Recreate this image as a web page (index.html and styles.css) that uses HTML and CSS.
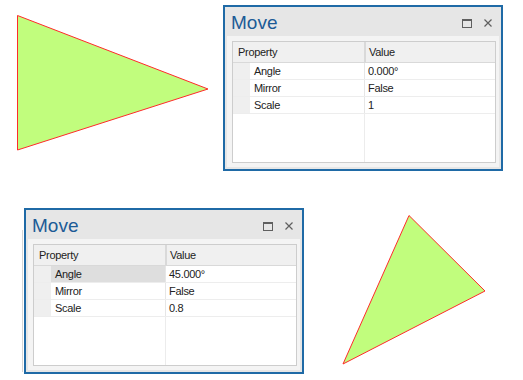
FILE: index.html
```html
<!DOCTYPE html>
<html>
<head>
<meta charset="utf-8">
<link rel="stylesheet" href="styles.css">
</head>
<body>
<div class="canvas">
  <svg class="shapes" width="523" height="380" viewBox="0 0 523 380">
    <polygon points="17.5,15.5 208,89 17.5,150" fill="#c1fd7d" stroke="#ff2a2a" stroke-width="1"/>
    <polygon points="409,215.5 485,291 343,364" fill="#c1fd7d" stroke="#ff2a2a" stroke-width="1"/>
  </svg>

  <div class="panel p1">
    <div class="titlebar">
      <span class="title">Move</span>
      <span class="btn-max"></span>
      <svg class="btn-close" width="8" height="8" viewBox="0 0 8 8"><path d="M0.5 0.5 L7.5 7.5 M7.5 0.5 L0.5 7.5" stroke="#5f5f5f" stroke-width="1.2"/></svg>
    </div>
    <div class="body">
      <div class="grid">
        <div class="hrow"><div class="hprop">Property</div><div class="hval">Value</div></div>
        <div class="row"><div class="gutter"></div><div class="name">Angle</div><div class="value">0.000°</div></div>
        <div class="row"><div class="gutter"></div><div class="name">Mirror</div><div class="value">False</div></div>
        <div class="row"><div class="gutter"></div><div class="name">Scale</div><div class="value">1</div></div>
        <div class="fill"><div class="fill-left"></div><div class="fill-right"></div></div>
      </div>
    </div>
  </div>

  <div class="panel p2">
    <div class="titlebar">
      <span class="title">Move</span>
      <span class="btn-max"></span>
      <svg class="btn-close" width="8" height="8" viewBox="0 0 8 8"><path d="M0.5 0.5 L7.5 7.5 M7.5 0.5 L0.5 7.5" stroke="#5f5f5f" stroke-width="1.2"/></svg>
    </div>
    <div class="body">
      <div class="grid">
        <div class="hrow"><div class="hprop">Property</div><div class="hval">Value</div></div>
        <div class="row"><div class="gutter"></div><div class="name selected">Angle</div><div class="value">45.000°</div></div>
        <div class="row"><div class="gutter"></div><div class="name">Mirror</div><div class="value">False</div></div>
        <div class="row"><div class="gutter"></div><div class="name">Scale</div><div class="value">0.8</div></div>
        <div class="fill"><div class="fill-left"></div><div class="fill-right"></div></div>
      </div>
    </div>
  </div>
</div>
</body>
</html>
```

FILE: styles.css
```css
* { box-sizing: border-box; }
html, body { margin: 0; padding: 0; background: #ffffff; }
body { font-family: "Liberation Sans", Arial, sans-serif; }

.canvas {
  position: relative;
  width: 523px;
  height: 380px;
  overflow: hidden;
}
.shapes { position: absolute; left: 0; top: 0; }

.panel {
  position: absolute;
  width: 280px;
  height: 166px;
  border: 2px solid #1f6aa6;
  background: #e6e6e6;
  padding: 0 2px 2px 2px;
  display: flex;
  flex-direction: column;
}
.p1 { left: 223px; top: 5px; }
.p2 { left: 24px; top: 208px; }
.p2::before {
  content: "";
  position: absolute;
  left: -4px;
  top: 20px;
  bottom: 0;
  width: 1px;
  background: #d6d6d6;
}

.titlebar {
  height: 29px;
  display: flex;
  align-items: center;
  padding-left: 4px;
  flex: none;
}
.title {
  font-size: 19px;
  color: #1c5b96;
  line-height: 29px;
  padding-top: 1px;
  flex: 1;
}
.btn-max {
  width: 10px;
  height: 9px;
  border: 1px solid #5f5f5f;
  border-top-width: 2px;
  margin-right: 12px;
  margin-top: 3px;
}
.btn-close {
  margin-right: 7px;
  margin-top: 3px;
}

.body {
  flex: 1;
  background: #f4f4f4;
  padding: 5px 3px 4px 5px;
  display: flex;
}
.grid {
  flex: 1;
  border: 1px solid #cdcdcd;
  background: #ffffff;
  display: flex;
  flex-direction: column;
  font-size: 11px;
  letter-spacing: -0.3px;
  color: #222222;
}
.hrow {
  height: 21px;
  display: flex;
  background: #f0f0f0;
  border-bottom: 1px solid #d9d9d9;
  flex: none;
}
.hprop {
  width: 133px;
  padding-left: 5px;
  border-right: 2px solid #d9d9d9;
  line-height: 20px;
}
.hval {
  flex: 1;
  padding-left: 3px;
  line-height: 20px;
}
.row {
  height: 17px;
  display: flex;
  border-bottom: 1px solid #ededed;
  flex: none;
}
.gutter {
  width: 17px;
  background: #efefef;
}
.name {
  width: 114px;
  padding-left: 4px;
  line-height: 16px;
}
.name.selected { background: #dedede; }
.value {
  flex: 1;
  border-left: 1px solid #e6e6e6;
  padding-left: 3px;
  line-height: 16px;
}
.fill {
  flex: 1;
  display: flex;
}
.fill-left { width: 131px; }
.fill-right { flex: 1; border-left: 1px solid #ececec; }
```
